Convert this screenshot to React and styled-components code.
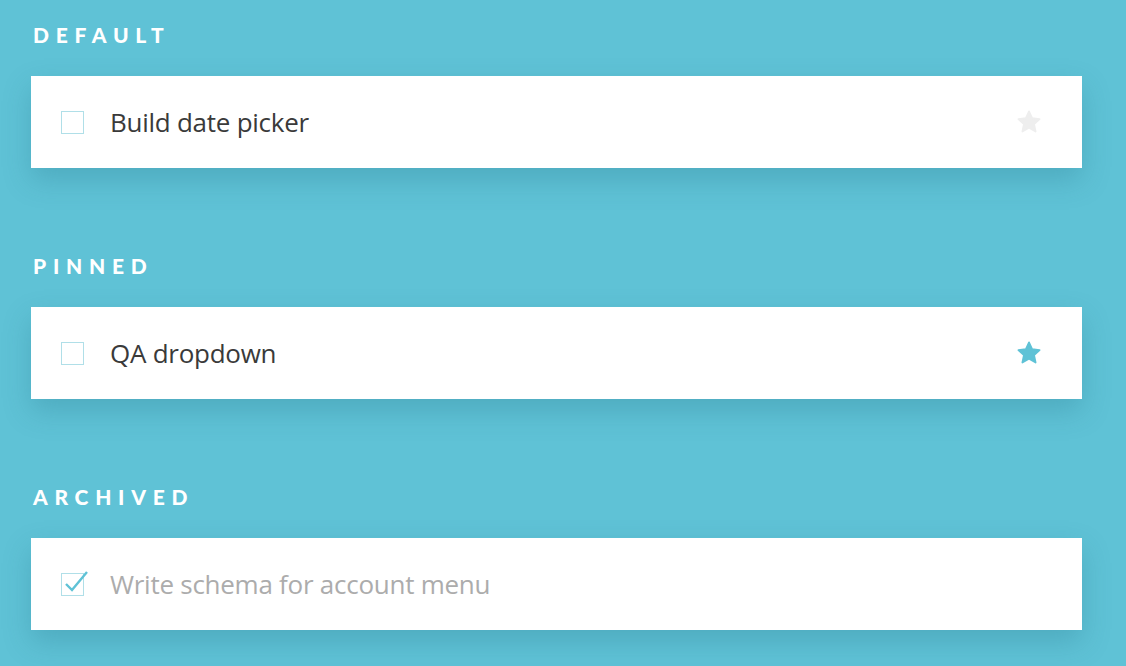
import React from "react";
import styled, { createGlobalStyle } from "styled-components";

const Global = createGlobalStyle`
  html, body { margin: 0; padding: 0; background: #5fc2d6; }
  body { font-family: "Nunito Sans", "Open Sans", "Lato", sans-serif; }
`;

const Page = styled.div`
  background: #5fc2d6;
  min-height: 666px;
  box-sizing: border-box;
  padding: 24px 44px 0 31px;
  display: flex;
  flex-direction: column;
  gap: 87px;
`;

const Section = styled.section`
  display: flex;
  flex-direction: column;
  gap: 31px;
`;

const Heading = styled.h2`
  margin: 0 0 0 2px;
  font-family: "Lato", sans-serif;
  font-weight: 900;
  font-size: 21px;
  line-height: 21px;
  letter-spacing: 0.32em;
  color: #ffffff;
  text-transform: uppercase;
`;

const Card = styled.div`
  background: #ffffff;
  height: 92px;
  display: flex;
  align-items: center;
  padding: 0 40px 0 30px;
  box-shadow: 0 12px 26px rgba(40, 120, 140, 0.3);
`;

const Box = styled.span`
  position: relative;
  width: 21px;
  height: 21px;
  border: 1px solid #b0dfe8;
  flex: none;
  margin-right: 26px;
`;

const Check = styled.svg`
  position: absolute;
  left: 1px;
  top: -6px;
  overflow: visible;
`;

const Title = styled.span`
  flex: 1;
  font-family: "Open Sans", "Lato", sans-serif;
  font-size: 26px;
  color: ${(p) => (p.$done ? "#acacac" : "#3a3a3a")};
  letter-spacing: -0.01em;
`;

const Star = styled.svg`
  flex: none;
  width: 26px;
  height: 26px;
`;

function StarIcon({ color }) {
  return (
    <Star viewBox="0 0 24 24">
      <path
        d="M12 2.2l2.9 6.3 6.9.8-5.1 4.7 1.4 6.8L12 17.4l-6.1 3.4 1.4-6.8-5.1-4.7 6.9-.8z"
        fill={color}
        stroke={color}
        strokeWidth="1.6"
        strokeLinejoin="round"
      />
    </Star>
  );
}

function Task({ title, pinned, archived }) {
  return (
    <Card>
      <Box>
        {archived && (
          <Check width="26" height="26" viewBox="0 0 26 26">
            <path
              d="M3 16l6 6L24 4"
              fill="none"
              stroke="#5fc2d6"
              strokeWidth="2.4"
            />
          </Check>
        )}
      </Box>
      <Title $done={archived}>{title}</Title>
      {!archived && <StarIcon color={pinned ? "#5fc2d6" : "#eeeeee"} />}
    </Card>
  );
}

export default function App() {
  return (
    <>
      <Global />
      <Page>
        <Section>
          <Heading>Default</Heading>
          <Task title="Build date picker" />
        </Section>
        <Section>
          <Heading>Pinned</Heading>
          <Task title="QA dropdown" pinned />
        </Section>
        <Section>
          <Heading>Archived</Heading>
          <Task title="Write schema for account menu" archived />
        </Section>
      </Page>
    </>
  );
}
